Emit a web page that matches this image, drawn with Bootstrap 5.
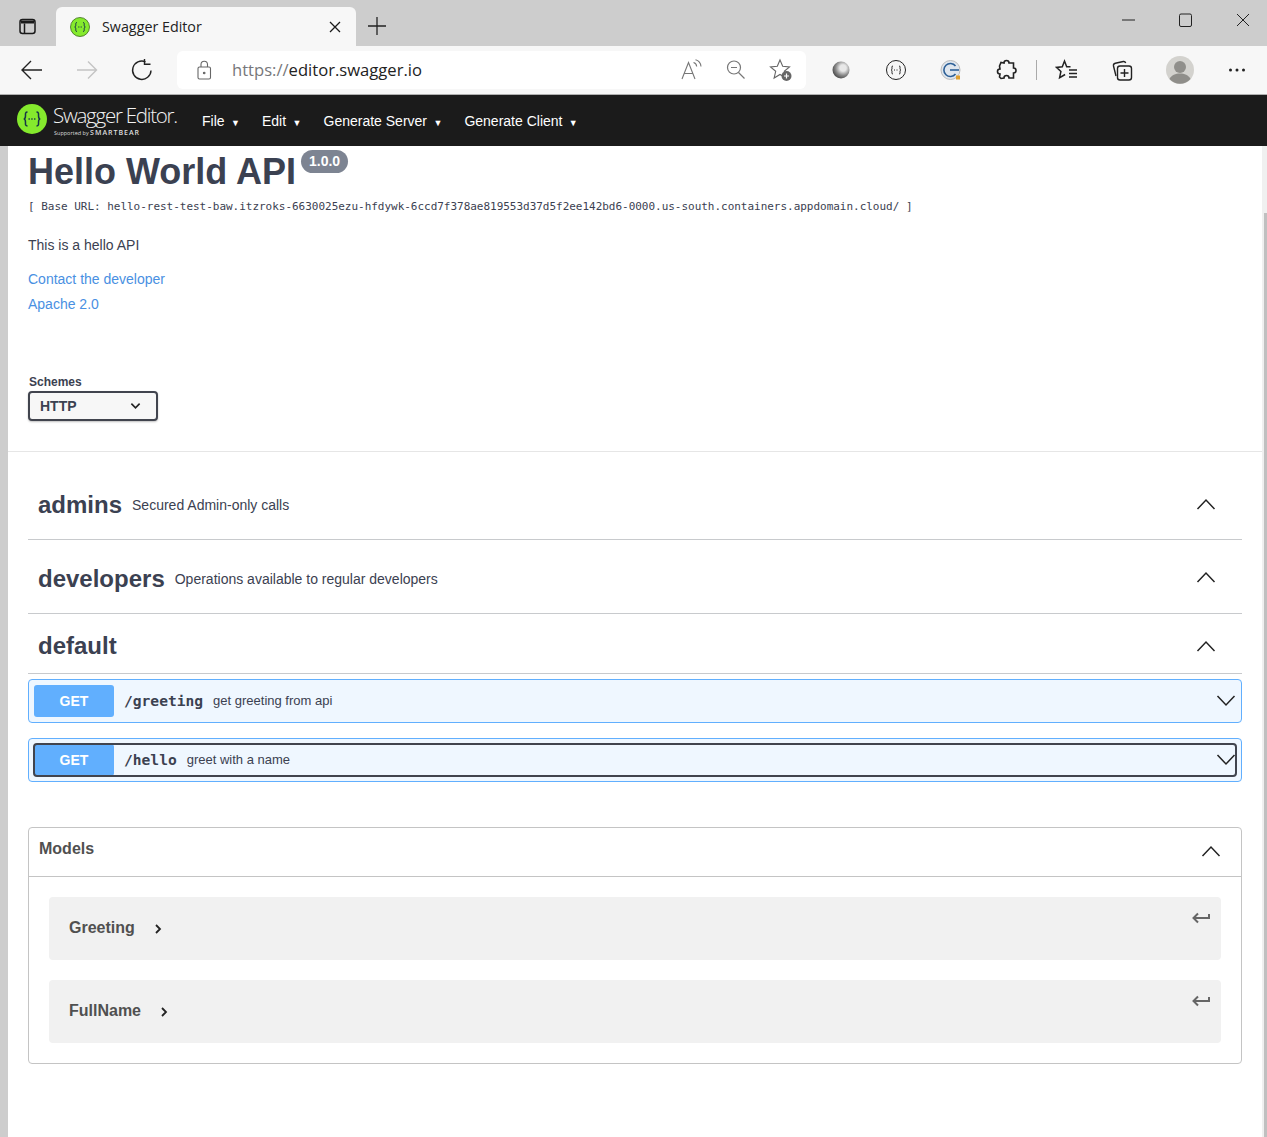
<!DOCTYPE html>
<html lang="en">
<head>
  <meta charset="UTF-8" />
  <meta name="viewport" content="width=device-width, initial-scale=1.0" />
  <title>Swagger Editor</title>
  <link href="https://cdn.jsdelivr.net/npm/bootstrap@5.3.3/dist/css/bootstrap.min.css" rel="stylesheet" />
  <style>
    html, body { height: 1137px; overflow: hidden; }
    body { font-family: "Liberation Sans", Arial, sans-serif; color: #3b4151; background: #fff; }

    /* browser chrome */
    .tab-strip { height: 46px; background: #cdcdcd; padding-left: 18px; }
    .tab-strip svg { display: block; }
    .tab-win-icon { margin-bottom: 9px; }
    .tab-active { width: 300px; height: 39px; margin-left: 18px; background: #f7f7f7; border-radius: 6px 6px 0 0; padding: 0 15px 0 14px; font: 14.3px "Open Sans", sans-serif; color: #222; }
    .tab-title { margin-left: 12px; }
    .tab-plus { margin: 0 0 11px 12px; }
    .win-buttons { gap: 39px; padding: 0 15px 1px 0; }
    .tool-bar { height: 49px; background: #f7f7f7; border-bottom: 1px solid #b0b0b0; padding: 5px 0 5px 0; }
    .nav-btns { width: 177px; padding-left: 20px; gap: 32px; }
    .addr-bar { width: 629px; height: 38px; background: #fff; border-radius: 6px; padding: 0 13px 0 19px; font: 16.6px "Open Sans", sans-serif; color: #222; }
    .addr-proto { color: #77777a; }
    .addr-url { margin: -2px 0 0 19px; }
    .addr-tools { gap: 21px; }
    .ext-tools { padding-left: 7px; }
    .tool-slot { width: 55px; flex: none; }
    .tool-slot-avatar { width: 61px; flex: none; }
    .tool-slot-more { width: 53px; flex: none; }
    .tool-sep-slot { width: 6px; flex: none; }
    .tool-sep { width: 1px; height: 20px; background: #aaa; }

    /* swagger topbar */
    .sw-topbar { height: 51px; background: #1b1b1b; padding-left: 17px; color: #fff; }
    .sw-logo { width: 161px; }
    .sw-logo-mark { flex-shrink: 0; margin-top: -3px; }
    .sw-logo-name { font: 300 20.5px/22px "Open Sans", sans-serif; letter-spacing: -1.25px; color: #f2f2f2; }
    .sw-logo-sub { font: 5.5px/7px "Open Sans", sans-serif; color: #ddd; margin-top: 3px; margin-left: 1px; }
    .sw-logo-sub b { font-weight: 600; font-size: 7px; letter-spacing: 1px; }
    .sw-logo-txt { margin: 0 0 0 6px; }
    .sw-menu { margin: 2px 0 0 24px; font-size: 14px; }
    .sw-menu-item { margin-right: 22.1px; white-space: nowrap; }
    .sw-menu-item i { font-style: normal; font-size: 9px; margin-left: 2.5px; }

    /* page */
    .page-wrap { height: 991px; }
    .side-strip { width: 8px; flex: none; background: #cdcdcd; }
    .scroll-strip { width: 5px; flex: none; background: #f0f0f0; padding: 67px 0 0 2px; }
    .scroll-thumb { height: 100%; background: #c0c0c0; }
    .page-main { padding: 0 20px; min-width: 0; }
    .api-info { height: 306px; }
    .api-title { font-size: 36px; font-weight: 700; line-height: 42px; margin: 5px 0 0 0; }
    .api-ver { background: #7d8492; color: #fff; font-size: 14px; font-weight: 700; line-height: 23px; padding: 0 8px; border-radius: 12px; margin: 4px 0 0 5px; }
    .api-base { font: 11px/14px "DejaVu Sans Mono", monospace; letter-spacing: -.022px; margin-top: 7px; white-space: nowrap; }
    .api-desc { font-size: 14px; line-height: 18px; margin-top: 22px; }
    .api-link { display: block; color: #4990e2; font-size: 14px; line-height: 18px; text-decoration: none; margin-top: 16px; }
    .api-link + .api-link { margin-top: 7px; }
    .scheme-label { font-size: 12px; font-weight: 700; line-height: 14px; margin: 62px 0 2px 1px; }
    .scheme-box { width: 130px; height: 30px; border: 2px solid #41444e; border-radius: 4px; background: #f7f7f7; box-shadow: 0 1px 2px rgba(0,0,0,.25); padding: 0 15px 0 10px; font-size: 14px; font-weight: 700; }
    .page-rule { height: 1px; background: #e6e6e6; margin: 30px -20px 0 -20px; }

    .tag-row { border-bottom: 1px solid #c8cacd; padding: 0 26px 0 10px; }
    .tag-admins { height: 88px; padding-top: 19px; }
    .tag-admins svg { margin-top: -2px; }
    .tag-devs { height: 74px; padding-top: 4px; }
    .tag-devs svg { margin-top: -4px; }
    .tag-devs .tag-desc { margin-top: 2px; }
    .tag-default { height: 60px; padding-top: 4px; }
    .tag-name { font-size: 24px; font-weight: 700; line-height: 28px; }
    .tag-desc { font-size: 14px; margin-left: 10px; }
    .op-block { height: 44px; border: 1px solid #61affe; border-radius: 4px; background: #eff7ff; padding: 5px; margin-top: 5px; }
    .op-block + .op-block { margin-top: 15px; }
    .op-inner { height: 32px; border-radius: 4px; }
    .op-focus { outline: 2px solid #41444e; outline-offset: -1px; border-radius: 3px; }
    .op-get { width: 80px; height: 32px; background: #61affe; color: #fff; border-radius: 3px; font-size: 14px; font-weight: 700; }
    .op-path { font: 700 14.6px "DejaVu Sans Mono", monospace; margin: -1px 0 0 10px; }
    .op-summary { font-size: 13px; margin-left: 10px; }

    .models-box { height: 237px; border: 1px solid #c4c4c4; border-radius: 4px; margin-top: 45px; }
    .models-head { height: 49px; border-bottom: 1px solid #c4c4c4; padding: 0 20px 0 10px; }
    .models-title { font-size: 16px; font-weight: 700; color: #505050; line-height: 18px; margin-top: -6px; }
    .models-chev { margin-top: -3px; }
    .models-body { padding: 20px 20px 0 20px; gap: 20px; }
    .model-row { height: 63px; background: #f1f1f1; border-radius: 4px; padding: 0 10px 0 20px; color: #505050; font-size: 16px; font-weight: 700; }
    .model-name { margin-top: -1px; }
    .model-chev { margin-left: 18px; }
    .model-arrow { margin-top: 14px; }
  </style>
</head>
<body>
  <!-- Browser chrome -->
  <div class="tab-strip d-flex align-items-end">
    <svg class="tab-win-icon" width="20" height="20" viewBox="0 0 20 20" fill="none" stroke="#1a1a1a" stroke-width="1.5"><rect x="2" y="2.500" width="15" height="14" rx="2.500"/><path d="M6.500 6.500v10" /><path d="M3 3.500h13v3H3z" fill="#1a1a1a" stroke="none"/></svg>
    <div class="tab-active d-flex align-items-center">
      <svg width="20" height="20" viewBox="0 0 20 20"><circle cx="10" cy="10" r="9.500" fill="#85ea2d" stroke="#3b6b1a" stroke-width=".8"/><path d="M7 5.500c-1.600 0-1.200 1.400-1.200 2.600 0 1.200-.5 1.900-1.100 1.900.6 0 1.100.7 1.100 1.900 0 1.200-.4 2.600 1.200 2.600M13 5.500c1.600 0 1.200 1.400 1.200 2.600 0 1.200.5 1.900 1.100 1.900-.6 0-1.100.7-1.100 1.900 0 1.200.4 2.600-1.200 2.600" fill="none" stroke="#173647" stroke-width="1"/><path d="M8 10h.8M9.600 10h.8M11.200 10h.8" stroke="#173647" stroke-width="1"/></svg>
      <span class="tab-title flex-grow-1">Swagger Editor</span>
      <svg width="12" height="12" viewBox="0 0 12 12" stroke="#1a1a1a" stroke-width="1.300"><path d="M1 1l10 10M11 1L1 11"/></svg>
    </div>
    <svg class="tab-plus" width="18" height="18" viewBox="0 0 18 18" stroke="#222" stroke-width="1.300"><path d="M9 0v18M0 9h18"/></svg>
    <div class="win-buttons d-flex align-items-center ms-auto mb-3">
      <svg width="18" height="18" viewBox="0 0 18 18" stroke="#222" stroke-width="1"><path d="M2 9h13"/></svg>
      <svg width="18" height="18" viewBox="0 0 18 18" fill="none" stroke="#222" stroke-width="1"><rect x="2.500" y="3" width="12" height="12.500" rx="1.500"/></svg>
      <svg width="18" height="18" viewBox="0 0 18 18" stroke="#222" stroke-width="1"><path d="M3 3l12 12M15 3L3 15"/></svg>
    </div>
  </div>

  <div class="tool-bar d-flex align-items-center">
    <div class="nav-btns d-flex align-items-center">
      <svg width="24" height="24" viewBox="0 0 24 24" fill="none" stroke="#222" stroke-width="1.400"><path d="M2 12h20M11 3l-9 9 9 9"/></svg>
      <svg width="22" height="24" viewBox="0 0 22 24" fill="none" stroke="#c4c4c4" stroke-width="1.400"><path d="M1 12h19M12 3.500l8.500 8.500-8.500 8.500"/></svg>
      <svg width="24" height="24" viewBox="0 0 24 24" fill="none" stroke="#222" stroke-width="1.400"><path d="M15.500 3.800A9.200 9.200 0 1 0 21 12.500"/><path d="M14.500 1v5.200h6"/></svg>
    </div>
    <div class="addr-bar d-flex align-items-center">
      <svg width="17" height="20" viewBox="0 0 17 20" fill="none" stroke="#666" stroke-width="1.100"><rect x="2" y="7" width="12.500" height="12" rx="1.500"/><path d="M5 7V4.500a3.200 3.200 0 0 1 6.500 0V7"/><circle cx="8.200" cy="13" r=".8" fill="#666"/></svg>
      <span class="addr-url"><span class="addr-proto">https://</span>editor.swagger.io</span>
      <div class="addr-tools d-flex align-items-center ms-auto">
        <svg width="23" height="22" viewBox="0 0 23 22" fill="none" stroke="#777" stroke-width="1.100"><path d="M1 20L7.500 3.500 14 20M3.300 14.500h8.400"/><path d="M12.500 3.500c1.800 .5 3 2 3.200 4M14.500 .8c3 .8 5.200 3.300 5.500 6.700"/></svg>
        <svg width="23" height="22" viewBox="0 0 23 22" fill="none" stroke="#777" stroke-width="1.200"><circle cx="9" cy="8.500" r="6.500"/><path d="M13.500 13.500l6 6M6 8.500h6"/></svg>
        <svg width="24" height="24" viewBox="0 0 24 24"><path d="M11 2l2.700 6.300 6.800.6-5.200 4.400 1.600 6.600L11 16.500 5.100 20l1.600-6.700L1.500 8.900l6.800-.6z" fill="none" stroke="#666" stroke-width="1.100"/><circle cx="17.500" cy="18" r="5" fill="#666"/><path d="M15 18h5M17.500 15.500v5" stroke="#fff" stroke-width="1.200"/></svg>
      </div>
    </div>
    <div class="ext-tools d-flex align-items-center">
      <div class="tool-slot d-flex justify-content-center"><svg width="20" height="20" viewBox="0 0 20 20"><defs><radialGradient id="extOrb" cx=".62" cy=".38" r=".62"><stop offset=".3" stop-color="#e8e8e8"/><stop offset=".7" stop-color="#8a8a8a"/><stop offset="1" stop-color="#555"/></radialGradient></defs><circle cx="10" cy="10" r="8.500" fill="url(#extOrb)"/></svg></div>
      <div class="tool-slot d-flex justify-content-center"><svg width="24" height="24" viewBox="0 0 24 24" fill="none" stroke="#222" stroke-width="1"><circle cx="12" cy="12" r="9.500"/><path d="M9 8c-1.500 0-1 1.500-1 2.500S7.500 12 7 12c.5 0 1 .5 1 1.500S7.500 16 9 16M15 8c1.500 0 1 1.500 1 2.500s.5 1.500 1 1.500c-.5 0-1 .5-1 1.500s.5 2.500-1 2.500M10 12h1M12.500 12h1"/></svg></div>
      <div class="tool-slot d-flex justify-content-center"><svg width="24" height="24" viewBox="0 0 24 24"><circle cx="11.500" cy="12" r="9.500" fill="#dfe6ee" stroke="#bbb"/><path d="M16.500 8a6.500 6.500 0 1 0 0 8" fill="none" stroke="#2c5f96" stroke-width="1.600"/><path d="M11 12h9" stroke="#2c5f96" stroke-width="1.600"/><rect x="17" y="17.500" width="4" height="4" fill="#e0a030"/></svg></div>
      <div class="tool-slot d-flex justify-content-center"><svg width="24" height="24" viewBox="0 0 24 24" fill="none" stroke="#222" stroke-width="1.600"><path d="M10 5a2.500 2.500 0 0 1 5 0h4.500v5a2.500 2.500 0 0 1 0 5v5H15a2.500 2.500 0 0 0-5 0l-3 .5-1.500-1.500.5-3a2.500 2.500 0 0 1 0-5l-.5-3L7 4.500z"/></svg></div>
      <div class="tool-sep-slot d-flex justify-content-center"><div class="tool-sep"></div></div>
      <div class="tool-slot d-flex justify-content-center"><svg width="24" height="24" viewBox="0 0 24 24" fill="none" stroke="#222" stroke-width="1.500"><path d="M15.500 8.800h-3.800L9.500 3 7.300 8.800 1.500 9.400l4.400 4-1.300 6.300 5.500-3.200"/><path d="M14 12h8M14 15.500h8M14 19h8"/></svg></div>
      <div class="tool-slot d-flex justify-content-center"><svg width="24" height="24" viewBox="0 0 24 24" fill="none" stroke="#222" stroke-width="1.400"><path d="M6 18L3.500 8c-.3-1.500.5-2.500 1.800-2.800l8-1.700c1.200-.2 2 .4 2.400 1.500"/><rect x="7.500" y="8" width="14" height="14" rx="2.500"/><path d="M14.500 11v8M10.500 15h8"/></svg></div>
      <div class="tool-slot-avatar d-flex justify-content-center"><svg width="28" height="28" viewBox="0 0 28 28"><circle cx="14" cy="14" r="14" fill="#d3d2ce"/><circle cx="14" cy="11" r="6" fill="#8f8e8a"/><path d="M3.500 23c2-4 6-5.500 10.500-5.500s8.500 1.500 10.500 5.500A14 14 0 0 1 3.500 23z" fill="#8f8e8a"/></svg></div>
      <div class="tool-slot-more d-flex justify-content-center"><svg width="18" height="18" viewBox="0 0 18 18" fill="#222"><circle cx="2.500" cy="9" r="1.500"/><circle cx="9" cy="9" r="1.500"/><circle cx="15.500" cy="9" r="1.500"/></svg></div>
    </div>
  </div>

  <!-- Swagger topbar -->
  <nav class="sw-topbar d-flex align-items-center">
    <div class="sw-logo d-flex align-items-center">
      <svg class="sw-logo-mark" width="30" height="30" viewBox="0 0 30 30"><circle cx="15" cy="15" r="15" fill="#85ea2d"/><path d="M10.500 8c-2.500 0-2 2-2 3.800s-.8 3.200-1.800 3.200c1 0 1.800 1.400 1.800 3.200s-.5 3.800 2 3.800M19.500 8c2.500 0 2 2 2 3.800s.8 3.200 1.800 3.200c-1 0-1.800 1.400-1.800 3.200s.5 3.800-2 3.800" fill="none" stroke="#173647" stroke-width="1.500"/><path d="M11.500 15h1.300M14.300 15h1.300M17.100 15h1.300" stroke="#173647" stroke-width="1.500"/></svg>
      <div class="sw-logo-txt text-nowrap">
        <div class="sw-logo-name">Swagger Editor.</div>
        <div class="sw-logo-sub">Supported by <b>SMARTBEAR</b></div>
      </div>
    </div>
    <div class="sw-menu d-flex align-items-center">
      <span class="sw-menu-item">File <i>▼</i></span>
      <span class="sw-menu-item">Edit <i>▼</i></span>
      <span class="sw-menu-item">Generate Server <i>▼</i></span>
      <span class="sw-menu-item">Generate Client <i>▼</i></span>
    </div>
  </nav>

  <div class="page-wrap d-flex">
    <div class="side-strip"></div>
    <main class="page-main flex-grow-1">
      <section class="api-info">
        <div class="d-flex align-items-start">
          <h1 class="api-title">Hello World API</h1>
          <span class="api-ver">1.0.0</span>
        </div>
        <div class="api-base">[ Base URL: hello-rest-test-baw.itzroks-6630025ezu-hfdywk-6ccd7f378ae819553d37d5f2ee142bd6-0000.us-south.containers.appdomain.cloud/ ]</div>
        <div class="api-desc">This is a hello API</div>
        <a class="api-link" href="#">Contact the developer</a>
        <a class="api-link" href="#">Apache 2.0</a>
        <div class="scheme-label">Schemes</div>
        <div class="scheme-box d-flex align-items-center justify-content-between">
          <span>HTTP</span>
          <svg width="11" height="8" viewBox="0 0 12 8" fill="none" stroke="#222" stroke-width="1.800"><path d="M1.500 1.500L6 6l4.500-4.500"/></svg>
        </div>
        <div class="page-rule"></div>
      </section>

      <section>
        <div class="tag-row tag-admins d-flex align-items-center">
          <span class="tag-name">admins</span><span class="tag-desc">Secured Admin-only calls</span>
          <svg class="ms-auto" width="20" height="14" viewBox="0 0 20 14" fill="none" stroke="#222" stroke-width="1.500"><path d="M1.500 12L10 3l8.500 9"/></svg>
        </div>
        <div class="tag-row tag-devs d-flex align-items-center">
          <span class="tag-name">developers</span><span class="tag-desc">Operations available to regular developers</span>
          <svg class="ms-auto" width="20" height="14" viewBox="0 0 20 14" fill="none" stroke="#222" stroke-width="1.500"><path d="M1.500 12L10 3l8.500 9"/></svg>
        </div>
        <div class="tag-row tag-default d-flex align-items-center">
          <span class="tag-name">default</span>
          <svg class="ms-auto" width="20" height="14" viewBox="0 0 20 14" fill="none" stroke="#222" stroke-width="1.500"><path d="M1.500 12L10 3l8.500 9"/></svg>
        </div>

        <div class="op-block">
          <div class="op-inner d-flex align-items-center">
            <span class="op-get d-flex align-items-center justify-content-center">GET</span>
            <span class="op-path">/greeting</span><span class="op-summary">get greeting from api</span>
            <svg class="ms-auto" width="20" height="14" viewBox="0 0 20 14" fill="none" stroke="#222" stroke-width="1.500"><path d="M1.500 2L10 11l8.500-9"/></svg>
          </div>
        </div>
        <div class="op-block">
          <div class="op-inner op-focus d-flex align-items-center">
            <span class="op-get d-flex align-items-center justify-content-center">GET</span>
            <span class="op-path">/hello</span><span class="op-summary">greet with a name</span>
            <svg class="ms-auto" width="20" height="14" viewBox="0 0 20 14" fill="none" stroke="#222" stroke-width="1.500"><path d="M1.500 2L10 11l8.500-9"/></svg>
          </div>
        </div>
      </section>

      <section class="models-box">
        <div class="models-head d-flex align-items-center">
          <span class="models-title">Models</span>
          <svg class="models-chev ms-auto" width="20" height="14" viewBox="0 0 20 14" fill="none" stroke="#222" stroke-width="1.500"><path d="M1.500 12L10 3l8.500 9"/></svg>
        </div>
        <div class="models-body d-flex flex-column">
          <div class="model-row d-flex align-items-center">
            <span class="model-name">Greeting</span>
            <svg class="model-chev" width="10" height="12" viewBox="0 0 10 12" fill="none" stroke="#222" stroke-width="1.800"><path d="M3 2l4 4-4 4"/></svg>
            <svg class="model-arrow ms-auto align-self-start" width="20" height="14" viewBox="0 0 20 14" fill="none" stroke="#666" stroke-width="2"><path d="M18 3v4H3M7 2.500L2.500 7 7 11.500"/></svg>
          </div>
          <div class="model-row d-flex align-items-center">
            <span class="model-name">FullName</span>
            <svg class="model-chev" width="10" height="12" viewBox="0 0 10 12" fill="none" stroke="#222" stroke-width="1.800"><path d="M3 2l4 4-4 4"/></svg>
            <svg class="model-arrow ms-auto align-self-start" width="20" height="14" viewBox="0 0 20 14" fill="none" stroke="#666" stroke-width="2"><path d="M18 3v4H3M7 2.500L2.500 7 7 11.500"/></svg>
          </div>
        </div>
      </section>
    </main>
    <div class="scroll-strip"><div class="scroll-thumb"></div></div>
  </div>

  <script src="https://cdn.jsdelivr.net/npm/bootstrap@5.3.3/dist/js/bootstrap.bundle.min.js"></script>
</body>
</html>
